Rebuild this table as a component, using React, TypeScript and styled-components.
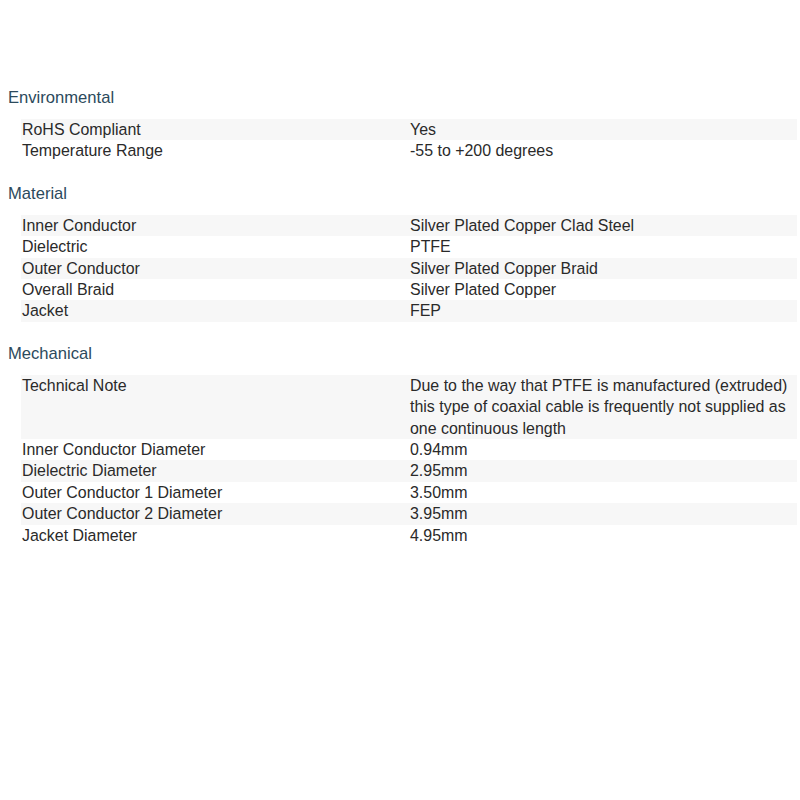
import React from "react";
import styled, { createGlobalStyle } from "styled-components";

const Global = createGlobalStyle`
  html, body { margin: 0; padding: 0; background: #ffffff; }
  body { font-family: "Liberation Sans", Arial, sans-serif; }
`;

const Page = styled.div`
  padding: 66px 3px 0 8px;
  width: 800px;
  box-sizing: border-box;
`;

const Section = styled.section`
  margin-top: 21px;
`;

const Heading = styled.h3`
  margin: 0 0 10px 0;
  font-size: 16.6px;
  line-height: 22px;
  font-weight: normal;
  color: #2c4a5c;
`;

const Table = styled.div`
  margin-left: 13px;
  display: flex;
  flex-direction: column;
`;

const Row = styled.div<{ $striped: boolean }>`
  display: grid;
  grid-template-columns: 389px 1fr;
  background: ${(p) => (p.$striped ? "#f7f7f7" : "transparent")};
  font-size: 15.95px;
  line-height: 21.4px;
  color: #2a2a2a;
`;

const Label = styled.div`
  padding-left: 1px;
`;

const Value = styled.div`
  padding-right: 6px;
`;

type Spec = [string, string];

const sections: { title: string; rows: Spec[] }[] = [
  {
    title: "Environmental",
    rows: [
      ["RoHS Compliant", "Yes"],
      ["Temperature Range", "-55 to +200 degrees"],
    ],
  },
  {
    title: "Material",
    rows: [
      ["Inner Conductor", "Silver Plated Copper Clad Steel"],
      ["Dielectric", "PTFE"],
      ["Outer Conductor", "Silver Plated Copper Braid"],
      ["Overall Braid", "Silver Plated Copper"],
      ["Jacket", "FEP"],
    ],
  },
  {
    title: "Mechanical",
    rows: [
      [
        "Technical Note",
        "Due to the way that PTFE is manufactured (extruded) this type of coaxial cable is frequently not supplied as one continuous length",
      ],
      ["Inner Conductor Diameter", "0.94mm"],
      ["Dielectric Diameter", "2.95mm"],
      ["Outer Conductor 1 Diameter", "3.50mm"],
      ["Outer Conductor 2 Diameter", "3.95mm"],
      ["Jacket Diameter", "4.95mm"],
    ],
  },
];

export default function App() {
  return (
    <>
      <Global />
      <Page>
        {sections.map((s) => (
          <Section key={s.title}>
            <Heading>{s.title}</Heading>
            <Table>
              {s.rows.map(([k, v], i) => (
                <Row key={k} $striped={i % 2 === 0}>
                  <Label>{k}</Label>
                  <Value>{v}</Value>
                </Row>
              ))}
            </Table>
          </Section>
        ))}
      </Page>
    </>
  );
}
